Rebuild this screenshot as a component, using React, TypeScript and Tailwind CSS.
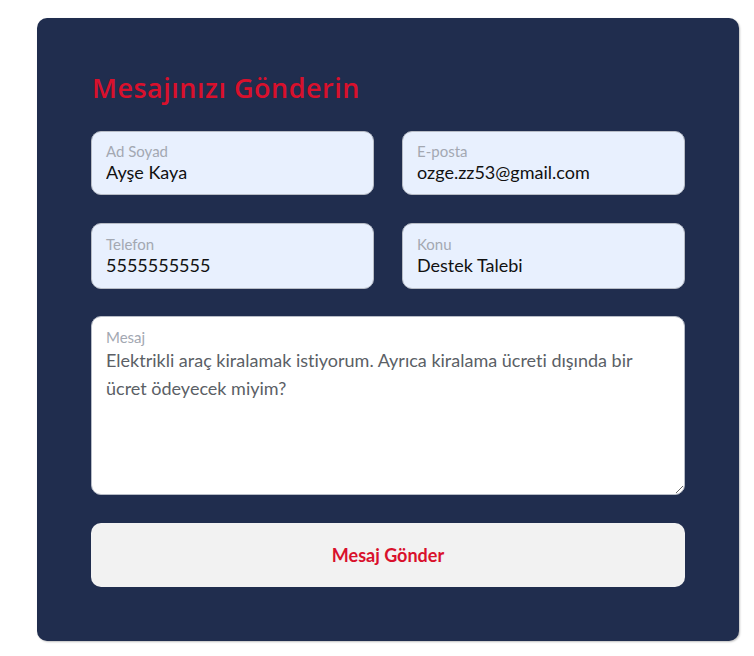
import React, { useState } from 'react';

const Field: React.FC<{ label: string; value: string; h?: string }> = ({ label, value, h = 'h-[64px]' }) => (
  <label className={`flex flex-col justify-center ${h} px-[14px] rounded-[10px] border border-[#b7bcc6] bg-[#e8f0fe]`}>
    <span className="text-[15px] leading-[18px] text-[#a3a8b2]">{label}</span>
    <input
      readOnly
      value={value}
      className="bg-transparent outline-none text-[18px] leading-[24px] text-[#111] p-0"
    />
  </label>
);

const App: React.FC = () => {
  const [msg, setMsg] = useState('Elektrikli araç kiralamak istiyorum. Ayrıca kiralama ücreti dışında bir ücret ödeyecek miyim?');

  return (
    <div
      className="min-h-screen bg-white pt-[18px] pl-[37px] [font-variant-ligatures:none]"
      style={{ fontFamily: 'Lato, "Noto Sans", sans-serif' }}
    >
      <div className="w-[702px] h-[623px] rounded-[10px] bg-[#202d4e] shadow-[1px_1px_2px_rgba(0,0,0,0.25)] p-[54px] flex flex-col">
        <h2
          className="text-[27px] leading-[32px] font-semibold tracking-[0.5px] text-[#d9102c] pl-[1px] mb-[27px]"
          style={{ fontFamily: '"Open Sans", sans-serif' }}
        >
          Mesajınızı Gönderin
        </h2>

        <div className="grid grid-cols-2 gap-x-[28px] gap-y-[28px]">
          <Field label="Ad Soyad" value="Ayşe Kaya" />
          <Field label="E-posta" value="ozge.zz53@gmail.com" />
          <Field label="Telefon" value="5555555555" h="h-[66px]" />
          <Field label="Konu" value="Destek Talebi" h="h-[66px]" />
        </div>

        {/* Message */}
        <div className="mt-[27px] h-[180px] rounded-[10px] border border-[#b7bcc6] bg-white flex flex-col pt-[11px] pl-[14px] overflow-hidden">
          <span className="text-[15px] leading-[18px] text-[#a3a8b2]">Mesaj</span>
          <textarea
            value={msg}
            onChange={(e) => setMsg(e.target.value)}
            className="flex-1 w-full resize-y outline-none text-[18px] leading-[28px] text-[#5b5f66] p-0 pr-[40px] bg-transparent [font-variant-ligatures:none]"
          />
        </div>

        <button className="mt-[28px] h-[64px] rounded-[10px] bg-[#f2f2f2] text-[18px] font-bold text-[#d9102c]">
          Mesaj Gönder
        </button>
      </div>
    </div>
  );
};

export default App;
